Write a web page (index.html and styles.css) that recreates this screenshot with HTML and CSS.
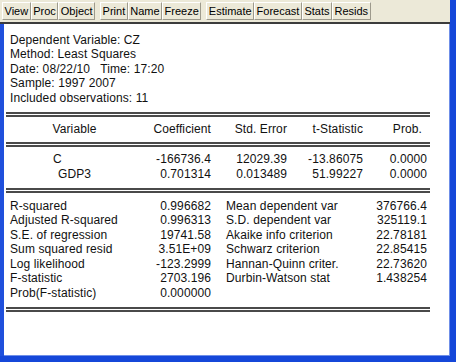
FILE: index.html
```html
<!DOCTYPE html>
<html lang="en">
<head>
    <meta charset="UTF-8">
    <title>Equation: Untitled</title>
    <link rel="stylesheet" href="styles.css">
</head>
<body>
    <div class="window">
        <!-- Toolbar -->
        <div class="toolbar">
            <span class="btn">View</span><span class="btn">Proc</span><span class="btn">Object</span>
            <span class="sep"></span>
            <span class="btn">Print</span><span class="btn">Name</span><span class="btn">Freeze</span>
            <span class="sep"></span>
            <span class="btn">Estimate</span><span class="btn">Forecast</span><span class="btn">Stats</span><span class="btn">Resids</span>
        </div>

        <div class="output">
            <div class="info">
                <div>Dependent Variable: CZ</div>
                <div>Method: Least Squares</div>
                <div>Date: 08/22/10&nbsp;&nbsp; Time: 17:20</div>
                <div>Sample: 1997 2007</div>
                <div>Included observations: 11</div>
            </div>

            <div class="rule rule-top"></div>

            <div class="coef head">
                <span class="name">Variable</span>
                <span>Coefficient</span>
                <span>Std. Error</span>
                <span>t-Statistic</span>
                <span class="prob-head">Prob.</span>
            </div>

            <div class="rule"></div>

            <div class="coef rows">
                <span class="name name-c">C</span>
                <span>-166736.4</span>
                <span>12029.39</span>
                <span>-13.86075</span>
                <span>0.0000</span>

                <span class="name">GDP3</span>
                <span>0.701314</span>
                <span>0.013489</span>
                <span>51.99227</span>
                <span>0.0000</span>
            </div>

            <div class="rule rule-mid"></div>

            <div class="stats">
                <span>R-squared</span><span class="num">0.996682</span>
                <span class="lbl2">Mean dependent var</span><span class="num">376766.4</span>

                <span>Adjusted R-squared</span><span class="num">0.996313</span>
                <span class="lbl2">S.D. dependent var</span><span class="num">325119.1</span>

                <span>S.E. of regression</span><span class="num">19741.58</span>
                <span class="lbl2">Akaike info criterion</span><span class="num">22.78181</span>

                <span>Sum squared resid</span><span class="num">3.51E+09</span>
                <span class="lbl2">Schwarz criterion</span><span class="num">22.85415</span>

                <span>Log likelihood</span><span class="num">-123.2999</span>
                <span class="lbl2">Hannan-Quinn criter.</span><span class="num">22.73620</span>

                <span>F-statistic</span><span class="num">2703.196</span>
                <span class="lbl2">Durbin-Watson stat</span><span class="num">1.438254</span>

                <span>Prob(F-statistic)</span><span class="num">0.000000</span>
                <span></span><span></span>
            </div>

            <div class="rule"></div>
        </div>
    </div>
</body>
</html>
```

FILE: styles.css
```css
html, body {
    margin: 0;
    padding: 0;
}
body {
    width: 456px;
    height: 362px;
    overflow: hidden;
    background-color: #ffffff;
}
.window {
    box-sizing: border-box;
    height: 362px;
    display: flex;
    flex-direction: column;
    border-right: 6px solid #1547d9;
    border-bottom: 6px solid #1547d9;
    box-shadow: inset -1px -1px 0 #6f8fe8;
}

/* Toolbar */
.toolbar {
    display: flex;
    align-items: center;
    height: 22px;
    padding-left: 2px;
    background-color: #ece9d8;
    border-bottom: 2px solid #3c3c3c;
    font-family: "Liberation Sans", Tahoma, sans-serif;
    font-size: 11px;
    color: #000;
}
.btn {
    box-sizing: border-box;
    height: 18px;
    line-height: 16px;
    padding: 0 1.5px;
    background-color: #ece9d8;
    border-top: 1px solid #ffffff;
    border-left: 1px solid #ffffff;
    border-right: 1px solid #9d9a8c;
    border-bottom: 1px solid #9d9a8c;
}
.sep {
    width: 5px;
}

/* Output area */
.output {
    flex: 1;
    border-left: 4px solid #1f50dc;
    padding: 8.5px 20px 0 2px;
    font-family: "Liberation Sans", Arial, sans-serif;
    font-size: 12px;
    line-height: 14.5px;
    letter-spacing: 0.1px;
    color: #111;
}
.info {
    padding-left: 4px;
    margin-bottom: 7px;
}
.rule {
    height: 1px;
    border-top: 2px solid #4a4a4a;
    border-bottom: 2px solid #4a4a4a;
    margin-bottom: 4.75px;
}
.coef {
    display: grid;
    grid-template-columns: 137px 68px 76px 76px 64px;
    text-align: right;
}
.head {
    margin-bottom: 5.75px;
}
.rows {
    margin-top: 1px;
    line-height: 15.5px;
    margin-bottom: 5px;
}
.coef .name {
    text-align: center;
}
.coef .name-c {
    padding-right: 34px;
}
.prob-head {
    padding-right: 5px;
}
.rule-mid {
    margin-bottom: 5.75px;
}
.stats {
    display: grid;
    grid-template-columns: 111px 90px 145px 71px;
    padding-left: 4px;
    margin-bottom: 6.5px;
}
.stats .num {
    text-align: right;
}
.stats .lbl2 {
    padding-left: 15px;
}
```
